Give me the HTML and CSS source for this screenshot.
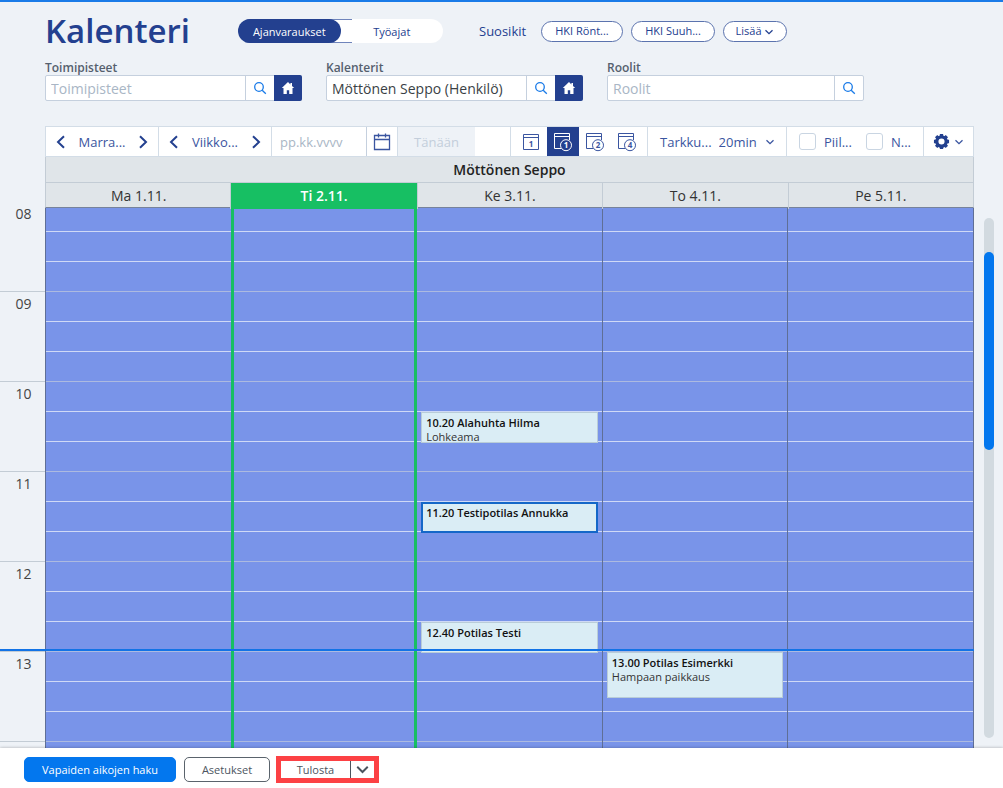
FILE: index.html
```html
<!DOCTYPE html>
<html lang="fi">
<head>
  <meta charset="UTF-8" />
  <meta name="viewport" content="width=device-width, initial-scale=1.0" />
  <title>Kalenteri</title>
  <link rel="stylesheet" href="styles.css">
</head>
<body>

<!-- shared icons -->
<svg class="icon-defs" aria-hidden="true">
  <symbol id="search" viewBox="0 0 14 14"><circle cx="6" cy="6" r="4.3" /><path d="M9.2 9.2l3.6 3.6" /></symbol>
  <symbol id="home" viewBox="0 0 14 14"><path d="M7 1L0.8 7h1.7v6h3.3V9.2h2.4V13h3.3V7h1.7L11 5V2H9.4v1.4z" /></symbol>
  <symbol id="down" viewBox="0 0 10 10"><path d="M1.5 3.2L5 6.7l3.5-3.5" /></symbol>
  <symbol id="left" viewBox="0 0 10 14"><path d="M8 1.2L2 7l6 5.8" /></symbol>
  <symbol id="right" viewBox="0 0 10 14"><path d="M2 1.2L8 7l-6 5.8" /></symbol>
</svg>

<header>
  <div class="title-row">
    <h1>Kalenteri</h1>
    <div class="toggle">
      <button class="active">Ajanvaraukset</button>
      <button>Työajat</button>
    </div>
    <div class="favourites">
      <span>Suosikit</span>
      <button class="pill ront">HKI Rönt...</button>
      <button class="pill suuh">HKI Suuh...</button>
      <button class="pill more">Lisää <svg><use href="#down" /></svg></button>
    </div>
  </div>

  <div class="filters">
    <div class="field">
      <label for="offices">Toimipisteet</label>
      <div class="field-box">
        <input type="text" id="offices" placeholder="Toimipisteet">
        <button class="search-btn" aria-label="Hae toimipiste"><svg><use href="#search" /></svg></button>
        <button class="home-btn" aria-label="Oma toimipiste"><svg><use href="#home" /></svg></button>
      </div>
    </div>
    <div class="field">
      <label for="calendars">Kalenterit</label>
      <div class="field-box">
        <input type="text" id="calendars" value="Möttönen Seppo (Henkilö)">
        <button class="search-btn" aria-label="Hae kalenteri"><svg><use href="#search" /></svg></button>
        <button class="home-btn" aria-label="Oma kalenteri"><svg><use href="#home" /></svg></button>
      </div>
    </div>
    <div class="field">
      <label for="roles">Roolit</label>
      <div class="field-box">
        <input type="text" id="roles" placeholder="Roolit">
        <button class="search-btn" aria-label="Hae rooli"><svg><use href="#search" /></svg></button>
      </div>
    </div>
  </div>
</header>

<main>
  <div class="toolbar">
    <div class="group stepper">
      <button aria-label="Edellinen kuukausi"><svg><use href="#left" /></svg></button>
      <span>Marra...</span>
      <button aria-label="Seuraava kuukausi"><svg><use href="#right" /></svg></button>
    </div>
    <div class="group stepper">
      <button aria-label="Edellinen viikko"><svg><use href="#left" /></svg></button>
      <span>Viikko...</span>
      <button aria-label="Seuraava viikko"><svg><use href="#right" /></svg></button>
    </div>
    <div class="group date">
      <input type="text" placeholder="pp.kk.vvvv" aria-label="Päivämäärä">
      <button aria-label="Avaa kalenteri">
        <svg viewBox="0 0 18 18"><path d="M1.5 2.5h15v14h-15zM1.5 6.5h15M5.5 0.5v4M12.5 0.5v4" /></svg>
      </button>
    </div>
    <div class="group today">
      <button disabled>Tänään</button>
    </div>
    <div class="group views">
      <button aria-label="Yksi päivä">
        <svg viewBox="0 0 20 20"><path d="M2.5 2.5h15v15h-15zM2.5 5.5h15" /><text x="10" y="15">1</text></svg>
      </button>
      <button class="active" aria-label="Yksi viikko">
        <svg viewBox="0 0 20 20"><path d="M8 16.5H1.5v-15h15V8M1.5 4.5h15" /><circle cx="13" cy="13.2" r="5.5" /><text x="13" y="16">1</text></svg>
      </button>
      <button aria-label="Kaksi viikkoa">
        <svg viewBox="0 0 20 20"><path d="M8 16.5H1.5v-15h15V8M1.5 4.5h15" /><circle cx="13" cy="13.2" r="5.5" /><text x="13" y="16">2</text></svg>
      </button>
      <button aria-label="Neljä viikkoa">
        <svg viewBox="0 0 20 20"><path d="M8 16.5H1.5v-15h15V8M1.5 4.5h15" /><circle cx="13" cy="13.2" r="5.5" /><text x="13" y="16">4</text></svg>
      </button>
    </div>
    <div class="group accuracy">
      <label for="accuracy">Tarkku...</label>
      <select id="accuracy"><option>20min</option></select>
      <svg><use href="#down" /></svg>
    </div>
    <div class="group checks">
      <input type="checkbox" id="hide"><label for="hide">Piil...</label>
      <input type="checkbox" id="show"><label for="show">N...</label>
    </div>
    <div class="group settings">
      <button aria-label="Näkymän asetukset">
        <svg class="gear" viewBox="0 0 18 18"><circle cx="9" cy="9" r="5" /><path d="M9 1v3M9 14v3M1 9h3M14 9h3M3.3 3.3l2.2 2.2M12.5 12.5l2.2 2.2M3.3 14.7l2.2-2.2M12.5 5.5l2.2-2.2" /></svg>
        <svg><use href="#down" /></svg>
      </button>
    </div>
  </div>

  <div class="person">Möttönen Seppo</div>
  <div class="day-names">
    <div>Ma 1.11.</div>
    <div class="current">Ti 2.11.</div>
    <div>Ke 3.11.</div>
    <div>To 4.11.</div>
    <div>Pe 5.11.</div>
  </div>

  <div class="schedule">
    <div class="scroll">
      <div class="hours">
        <div>08</div>
        <div>09</div>
        <div>10</div>
        <div>11</div>
        <div>12</div>
        <div>13</div>
      </div>
      <div class="days">
        <div class="day"></div>
        <div class="day current"></div>
        <div class="day">
          <article class="event at-1020"><b>10.20 Alahuhta Hilma</b><p>Lohkeama</p></article>
          <article class="event selected at-1120"><b>11.20 Testipotilas Annukka</b></article>
          <article class="event at-1240"><b>12.40 Potilas Testi</b></article>
        </div>
        <div class="day">
          <article class="event at-1300"><b>13.00 Potilas Esimerkki</b><p>Hampaan paikkaus</p></article>
        </div>
        <div class="day"></div>
      </div>
      <div class="now-line"></div>
    </div>
    <div class="scrollbar"><div class="thumb"></div></div>
  </div>
</main>

<footer>
  <button class="btn primary">Vapaiden aikojen haku</button>
  <button class="btn">Asetukset</button>
  <div class="print">
    <button>Tulosta</button>
    <button class="print-menu" aria-label="Tulostusvalinnat"><svg><use href="#down" /></svg></button>
  </div>
</footer>

</body>
</html>
```
FILE: styles.css
```css
* {
  box-sizing: border-box;
}
body {
  margin: 0;
  height: 100vh;
  display: flex;
  flex-direction: column;
  overflow: hidden;
  font-family: "Open Sans", "Noto Sans", sans-serif;
  font-size: 13px;
  color: #333;
  background: #eef2f7;
  border-top: 2px solid #1a7be8;
}
button, input, select {
  font: inherit;
  color: inherit;
  margin: 0;
  padding: 0;
  border: none;
  background: none;
}
button {
  cursor: pointer;
}
svg {
  width: 10px;
  height: 10px;
  fill: none;
  stroke: currentColor;
  stroke-width: 1.3;
}
.icon-defs {
  display: none;
}

/* header */
header {
  padding: 4px 20px 25px 45px;
  color: #23408f;
}
.title-row {
  display: flex;
  align-items: center;
  height: 50px;
}
h1 {
  width: 193px;
  margin: 0;
  font-size: 33px;
  font-weight: 600;
  line-height: 48px;
}
.toggle {
  display: flex;
  width: 205px;
  height: 24px;
  border-radius: 12px;
  background:
    linear-gradient(#6f84bb, #6f84bb) 0 0 / 114px 1px no-repeat,
    linear-gradient(#6f84bb, #6f84bb) 0 100% / 114px 1px no-repeat,
    #fff;
}
.toggle button {
  flex: 1;
  border-radius: 12px;
  font-size: 11px;
}
.toggle .active {
  background: #23408f;
  color: #fff;
}
.favourites {
  display: flex;
  align-items: center;
  gap: 8px;
  margin-left: 36px;
}
.favourites span {
  width: 54px;
}
.pill {
  height: 21px;
  border: 1px solid #5b73ae;
  border-radius: 11px;
  background: #fff;
  font-size: 11px;
  line-height: 18px;
}
.pill svg {
  vertical-align: middle;
}
.ront {
  width: 82px;
}
.suuh {
  width: 84px;
}
.more {
  width: 64px;
}
.filters {
  display: flex;
  gap: 24px;
  margin-top: 4px;
}
.field {
  flex: 0 1 257px;
}
.field label {
  display: block;
  padding-top: 1px;
  font-size: 12px;
  font-weight: 600;
  line-height: 14px;
  color: #55606e;
}
.field-box {
  display: flex;
  height: 26px;
  border: 1px solid #c5d0de;
  border-radius: 2px;
  background: #fff;
}
.field input {
  flex: 1;
  min-width: 0;
  padding: 0 5px;
  font-size: 14px;
  color: #3a3f45;
}
input::placeholder {
  color: #a9b6c5;
  opacity: 1;
}
.search-btn {
  width: 29px;
  border-left: 1px solid #c5d0de;
  color: #1a7be8;
}
.search-btn svg, .home-btn svg {
  display: block;
  width: 14px;
  height: 14px;
  margin: auto;
}
.home-btn {
  width: 28px;
  margin: -1px -1px -1px 0;
  border-radius: 0 2px 2px 0;
  background: #23408f;
  color: #fff;
}
.home-btn svg {
  fill: #fff;
  stroke: none;
}

/* calendar */
main {
  flex: 1;
  min-height: 0;
  display: flex;
  flex-direction: column;
  overflow: hidden;
}
.toolbar, .person, .day-names {
  margin: 0 29px 0 45px;
  flex-shrink: 0;
}
.toolbar {
  display: flex;
  height: 31px;
  border: 1px solid #d3dde7;
  background: #fff;
  color: #3a55a0;
}
.group {
  display: flex;
  align-items: center;
  border-right: 1px solid #d3dde7;
}
.stepper {
  width: 113px;
  justify-content: space-between;
  padding: 0 10px;
}
.stepper svg {
  display: block;
  height: 14px;
  stroke: #23408f;
  stroke-width: 2;
}
.date {
  width: 126px;
  align-items: stretch;
}
.date input {
  flex: 1;
  min-width: 0;
  padding: 0 8px;
}
.date button {
  width: 31px;
  border-left: 1px solid #c5d0de;
}
.date svg {
  display: block;
  width: 18px;
  height: 18px;
  margin: auto;
}
.today {
  width: 113px;
  align-items: stretch;
}
.today button {
  width: 77px;
  background: #eef2f7;
  color: #c3cedb;
}
.views {
  width: 137px;
  align-items: stretch;
  padding: 0 4px;
}
.views button {
  flex: 1;
}
.views .active {
  background: #23408f;
  color: #fff;
}
.views svg {
  display: block;
  width: 20px;
  height: 20px;
  margin: auto;
  stroke-width: 1;
}
.views text {
  fill: currentColor;
  stroke: none;
  font-size: 8px;
  font-weight: 700;
  text-anchor: middle;
}
.accuracy {
  flex: 1;
  gap: 7px;
  padding-left: 12px;
}
.accuracy select {
  appearance: none;
}
.checks {
  width: 137px;
  gap: 8px;
  padding-left: 12px;
}
.checks input {
  appearance: none;
  width: 17px;
  height: 17px;
  border: 1px solid #c9d5e2;
  border-radius: 3px;
}
.checks label + input {
  margin-left: 6px;
}
.settings {
  width: 49px;
  justify-content: center;
  border: none;
}
.settings button {
  display: flex;
  align-items: center;
  gap: 4px;
}
.settings .gear {
  width: 17px;
  height: 17px;
  stroke: #23408f;
  stroke-width: 3.5;
}
.person, .day-names {
  border: 1px solid #c3ccd5;
  border-top: none;
  background: #e0e5e9;
}
.person {
  height: 26px;
  font-size: 14px;
  font-weight: 600;
  line-height: 26px;
  text-align: center;
  color: #222;
}
.day-names {
  position: relative;
  z-index: 1;
  display: grid;
  grid-template-columns: repeat(5, 1fr);
  height: 25px;
  font-size: 14px;
  line-height: 26px;
  text-align: center;
  border-bottom-color: #77839b;
}
.day-names div + div {
  border-left: 1px solid #c3ccd5;
}
.day-names .current {
  margin-left: -1px;
  background: #17bf63;
  color: #fff;
  font-weight: 600;
}
.schedule {
  flex: 1;
  min-height: 0;
  display: flex;
}
/* the first hour is scrolled slightly under the day names */
.scroll {
  position: relative;
  flex: 1;
  display: flex;
  align-items: flex-start;
  margin-top: -6px;
}
.hours {
  width: 45px;
  flex-shrink: 0;
}
.hours div {
  height: 90px;
  padding: 2px 0 0 2px;
  border-bottom: 1px solid #c3ccd5;
  font-size: 14px;
  line-height: 20px;
  text-align: center;
  color: #444;
}
.days {
  flex: 1;
  display: grid;
  grid-template-columns: repeat(5, 1fr);
  border-left: 1px solid #5f6f96;
}
/* one row is ten minutes */
.day {
  display: grid;
  grid-template-rows: repeat(42, 15px);
  grid-template-columns: 100%;
  padding: 0 4px;
  border-right: 1px solid #5f6f96;
  background: repeating-linear-gradient(#7994e9 0 29px, #cfd9f6 29px 30px, #7994e9 30px 59px, #cfd9f6 59px 60px, #7994e9 60px 89px, #acbae0 89px 90px);
}
.day:first-child {
  border-right: none;
}
.day.current {
  margin-left: -1px;
  border-left: 3px solid #17bf63;
  border-right: 3px solid #17bf63;
}
.event {
  margin-bottom: -1px;
  padding: 2px 4px;
  border: 1px solid #b9cdd8;
  background: #daedf5;
  font-size: 11px;
  line-height: 15px;
  white-space: nowrap;
}
.event b {
  display: block;
  font-weight: 600;
  color: #111;
}
.event p {
  margin: 0;
  line-height: 13px;
}
.selected {
  padding: 1px 3px;
  border: 2px solid #1467c8;
}
.at-1020 {
  grid-row: 15 / span 2;
}
.at-1120 {
  grid-row: 21 / span 2;
}
.at-1240 {
  grid-row: 29 / span 2;
}
.at-1300 {
  grid-row: 31 / span 3;
}
.now-line {
  position: absolute;
  top: 447px;
  left: 0;
  right: 0;
  height: 2px;
  background: #1273e6;
}
.scrollbar {
  width: 10px;
  margin: 10px 9px 10px 10px;
  border-radius: 5px;
  background: #d2dae0;
}
.thumb {
  height: 38%;
  margin-top: 34px;
  border-radius: 5px;
  background: #0377ee;
}

/* footer */
footer {
  display: flex;
  flex-shrink: 0;
  align-items: center;
  gap: 8px;
  height: 40px;
  padding: 2px 24px 0;
  background: #fff;
  box-shadow: 0 0 3px rgba(0, 0, 0, 0.3);
  font-size: 11px;
  color: #4b545e;
  z-index: 1;
}
.btn {
  width: 86px;
  height: 25px;
  border: 1px solid #5a636c;
  border-radius: 5px;
}
.primary {
  width: 152px;
  border-color: #0377ee;
  background: #0377ee;
  color: #fff;
}
.print {
  display: flex;
  width: 103px;
  height: 27px;
  margin-left: -2px;
  border: 5px solid #fc4144;
}
.print button {
  flex: 1;
}
.print .print-menu {
  flex: 0 0 24px;
  border-left: 1px solid #4b545e;
}
.print-menu svg {
  display: block;
  width: 15px;
  height: 15px;
  margin: auto;
}
```
